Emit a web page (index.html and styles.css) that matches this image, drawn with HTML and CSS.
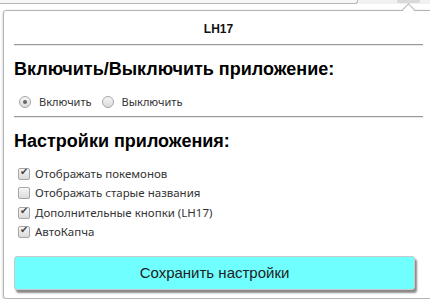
FILE: index.html
```html
<!DOCTYPE html>
<html lang="ru">
<head>
    <meta charset="UTF-8">
    <title>LH17</title>
    <link rel="stylesheet" href="styles.css">
</head>
<body>
    <div class="toolbar">
        <div class="address"></div>
        <div class="ext-button"></div>
    </div>

    <div class="popup">
        <span class="arrow"></span>
        <div class="title">LH17</div>
        <hr>
        <h2>Включить/Выключить приложение:</h2>
        <div class="radios">
            <label><input type="radio" name="state" checked> Включить</label>
            <label><input type="radio" name="state"> Выключить</label>
        </div>
        <hr>
        <h2>Настройки приложения:</h2>
        <div class="options">
            <label><input type="checkbox" checked> Отображать покемонов</label>
            <label><input type="checkbox"> Отображать старые названия</label>
            <label><input type="checkbox" checked> Дополнительные кнопки (LH17)</label>
            <label><input type="checkbox" checked> АвтоКапча</label>
        </div>
        <button class="save">Сохранить настройки</button>
    </div>
</body>
</html>
```

FILE: styles.css
```css
body {
    margin: 0;
    background-color: white;
    font-family: "Noto Sans", sans-serif;
    color: #222;
}

.toolbar {
    display: flex;
    height: 4px;
    background-color: #f1f1f1;
}

.address {
    width: 357px;
    height: 3px;
    background-color: #f7f7f7;
    border-bottom: 1px solid #b8b8b8;
    border-right: 1px solid #b8b8b8;
    border-bottom-right-radius: 3px;
}

.ext-button {
    width: 23px;
    height: 3px;
    margin-left: 39px;
    background-color: #d9d9d9;
    border-radius: 0 0 2px 2px;
}

.popup {
    position: relative;
    width: 409px;
    height: 287px;
    margin: 6px 0 0 3px;
    padding: 0 9px 0 10px;
    border: 1px solid #b4b4b4;
    border-radius: 3px;
    box-shadow: 0 1px 3px rgba(0, 0, 0, 0.25);
    background-color: white;
}

.arrow {
    position: absolute;
    top: -6px;
    left: 400px;
    width: 8px;
    height: 8px;
    background-color: white;
    border-top: 1px solid #b4b4b4;
    border-left: 1px solid #b4b4b4;
    transform: rotate(45deg);
}

.title {
    margin-top: 10px;
    font-family: Arial, "Liberation Sans", sans-serif;
    font-size: 12px;
    font-weight: bold;
    line-height: 16px;
    text-align: center;
    color: #111;
}

hr {
    margin: 7px 0 0 0;
    border: none;
    border-top: 1px solid #9a9a9a;
    border-bottom: 1px solid #e8e8e8;
}

h2 {
    margin: 12px 0 0 0;
    font-family: Arial, "Liberation Sans", sans-serif;
    font-size: 18px;
    line-height: 23px;
    color: #000;
}

.radios {
    display: flex;
    gap: 10px;
    margin: 12px 0 0 5px;
    font-size: 11px;
    line-height: 18px;
    color: #333;
}

.radios input {
    margin-right: 8px;
}

.radios + hr {
    margin-top: 5px;
}

.options {
    display: flex;
    flex-direction: column;
    margin: 11px 0 0 4px;
    font-size: 11.5px;
    line-height: 19.4px;
    color: #333;
}

label {
    display: flex;
    align-items: center;
}

input {
    appearance: none;
    position: relative;
    width: 12px;
    height: 12px;
    margin: 0 5px 0 0;
    border: 1px solid #a6a6a6;
    background: linear-gradient(#f6f6f6, #dadada);
}

input[type="checkbox"] {
    border-radius: 2px;
}

input[type="checkbox"]:checked::after {
    content: "✔";
    position: absolute;
    top: -3px;
    left: 1px;
    font-size: 10px;
    color: #444;
}

input[type="radio"] {
    border-radius: 50%;
}

input[type="radio"]:checked::after {
    content: "";
    position: absolute;
    top: 3px;
    left: 3px;
    width: 4px;
    height: 4px;
    border-radius: 50%;
    background-color: #666;
}

.save {
    display: block;
    width: 401px;
    height: 34px;
    margin-top: 14px;
    background-color: #70ffff;
    border: 1px solid #c8c8c8;
    border-radius: 3px;
    box-shadow: 2px 3px 2px #8a8a8a;
    font-family: Arial, "Liberation Sans", sans-serif;
    font-size: 15px;
    color: #222;
}
```
